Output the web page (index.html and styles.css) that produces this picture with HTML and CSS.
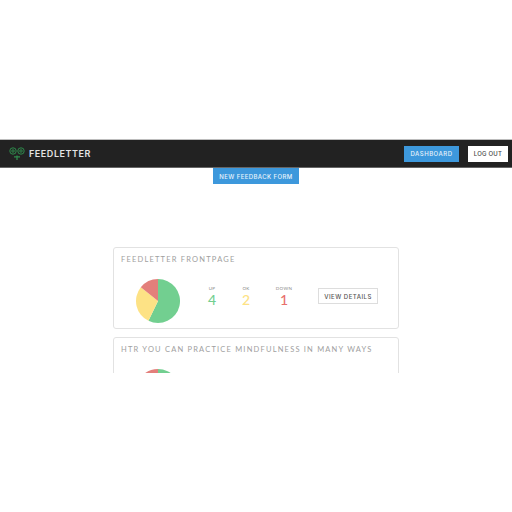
FILE: index.html
```html
<!DOCTYPE html>
<html lang="en">
<head>
    <meta charset="UTF-8">
    <title>Feedletter</title>
    <link rel="stylesheet" href="styles.css">
</head>
<body>
    <div class="viewport">
        <header class="navbar">
            <div class="brand">
                <svg class="logo" viewBox="0 0 16 13" width="16" height="13" fill="none" stroke="#2f8a4c" stroke-width="1">
                    <circle cx="4" cy="4" r="3.2"/>
                    <circle cx="4" cy="4" r="1.2"/>
                    <circle cx="12" cy="4" r="3.2"/>
                    <circle cx="12" cy="4" r="1.2"/>
                    <path d="M8 13V8.5M5 9.8h6" stroke-width="1.3"/>
                </svg>
                <span class="brand-name">FEEDLETTER</span>
            </div>
            <nav class="nav-actions">
                <a class="btn btn-blue">DASHBOARD</a>
                <a class="btn btn-white">LOG OUT</a>
            </nav>
        </header>

        <div class="new-form">
            <a class="btn btn-blue btn-new">NEW FEEDBACK FORM</a>
        </div>

        <main class="card-list">
            <section class="card">
                <h2 class="card-title">FEEDLETTER FRONTPAGE</h2>
                <div class="card-body">
                    <svg class="pie" viewBox="0 0 44 44" width="44" height="44">
                        <path fill="#72cf90" d="M22 22V0A22 22 0 1 1 12.46 41.82Z"/>
                        <path fill="#fde285" d="M22 22L12.46 41.82A22 22 0 0 1 4.8 8.28Z"/>
                        <path fill="#e37f7b" d="M22 22L4.8 8.28A22 22 0 0 1 22 0Z"/>
                    </svg>
                    <div class="stats">
                        <div class="stat"><span class="stat-label">UP</span><span class="stat-num up">4</span></div>
                        <div class="stat"><span class="stat-label">OK</span><span class="stat-num ok">2</span></div>
                        <div class="stat stat-wide"><span class="stat-label">DOWN</span><span class="stat-num down">1</span></div>
                    </div>
                    <a class="btn btn-details">VIEW DETAILS</a>
                </div>
            </section>

            <section class="card">
                <h2 class="card-title">HTR YOU CAN PRACTICE MINDFULNESS IN MANY WAYS</h2>
                <div class="card-body">
                    <svg class="pie" viewBox="0 0 44 44" width="44" height="44">
                        <path fill="#72cf90" d="M22 22V0A22 22 0 1 1 12.46 41.82Z"/>
                        <path fill="#fde285" d="M22 22L12.46 41.82A22 22 0 0 1 4.8 8.28Z"/>
                        <path fill="#e37f7b" d="M22 22L4.8 8.28A22 22 0 0 1 22 0Z"/>
                    </svg>
                </div>
            </section>
        </main>
    </div>
</body>
</html>
```

FILE: styles.css
```css
html, body {
    margin: 0;
    height: 100%;
    background: white;
    font-family: Lato, sans-serif;
}
.viewport {
    box-sizing: border-box;
    height: 373px;
    padding-top: 139px;
    overflow: hidden;
}
.navbar {
    box-sizing: border-box;
    height: 29px;
    padding: 0 4px 0 9px;
    display: flex;
    justify-content: space-between;
    align-items: center;
    background: #222222;
    border-top: 1px solid #bdbdbd;
    border-bottom: 1px solid #666666;
}
.brand {
    display: flex;
    align-items: center;
    gap: 4px;
}
.brand-name {
    font-family: Inter, sans-serif;
    font-size: 9px;
    font-weight: 600;
    letter-spacing: 0.55px;
    color: #e4e4e4;
}
.nav-actions {
    display: flex;
    gap: 9px;
}
.btn {
    font-family: Inter, sans-serif;
    font-size: 6px;
    font-weight: 500;
    letter-spacing: 0.5px;
    display: flex;
    justify-content: center;
    align-items: center;
    box-sizing: border-box;
}
.btn-blue {
    width: 55px;
    height: 16px;
    background: #3d98dc;
    color: #e8f3fb;
}
.btn-white {
    width: 40px;
    height: 16px;
    background: white;
    color: #444444;
    letter-spacing: 0.2px;
}
.new-form {
    display: flex;
    justify-content: center;
}
.btn-new {
    width: 86px;
    letter-spacing: 0.4px;
}
.card-list {
    width: 286px;
    margin: 63px auto 0;
    display: flex;
    flex-direction: column;
    gap: 8px;
}
.card {
    box-sizing: border-box;
    height: 82px;
    flex-shrink: 0;
    padding: 6px 7px 0;
    border: 1px solid #e2e2e2;
    border-radius: 3px;
}
.card-title {
    margin: 0;
    font-size: 7.5px;
    font-weight: 400;
    letter-spacing: 1.2px;
    line-height: 11px;
    white-space: nowrap;
    color: #a0a0a0;
}
.card-body {
    margin-top: 14px;
    padding-left: 15px;
    display: flex;
    align-items: center;
}
.pie {
    flex-shrink: 0;
}
.stats {
    margin: 0 0 9px 22px;
    display: flex;
    gap: 14px;
}
.stat {
    width: 20px;
    display: flex;
    flex-direction: column;
    align-items: center;
}
.stat-wide {
    width: 28px;
}
.stat-label {
    font-size: 4.5px;
    line-height: 7px;
    letter-spacing: 0.3px;
    color: #8a8a8a;
}
.stat-num {
    font-size: 14px;
    line-height: 16px;
    font-weight: 500;
}
.up { color: #72cf90; }
.ok { color: #fde285; }
.down { color: #e8706c; }
.btn-details {
    width: 60px;
    height: 16px;
    margin: 0 0 10px 20px;
    border: 1px solid #dddddd;
    color: #555555;
}
```
